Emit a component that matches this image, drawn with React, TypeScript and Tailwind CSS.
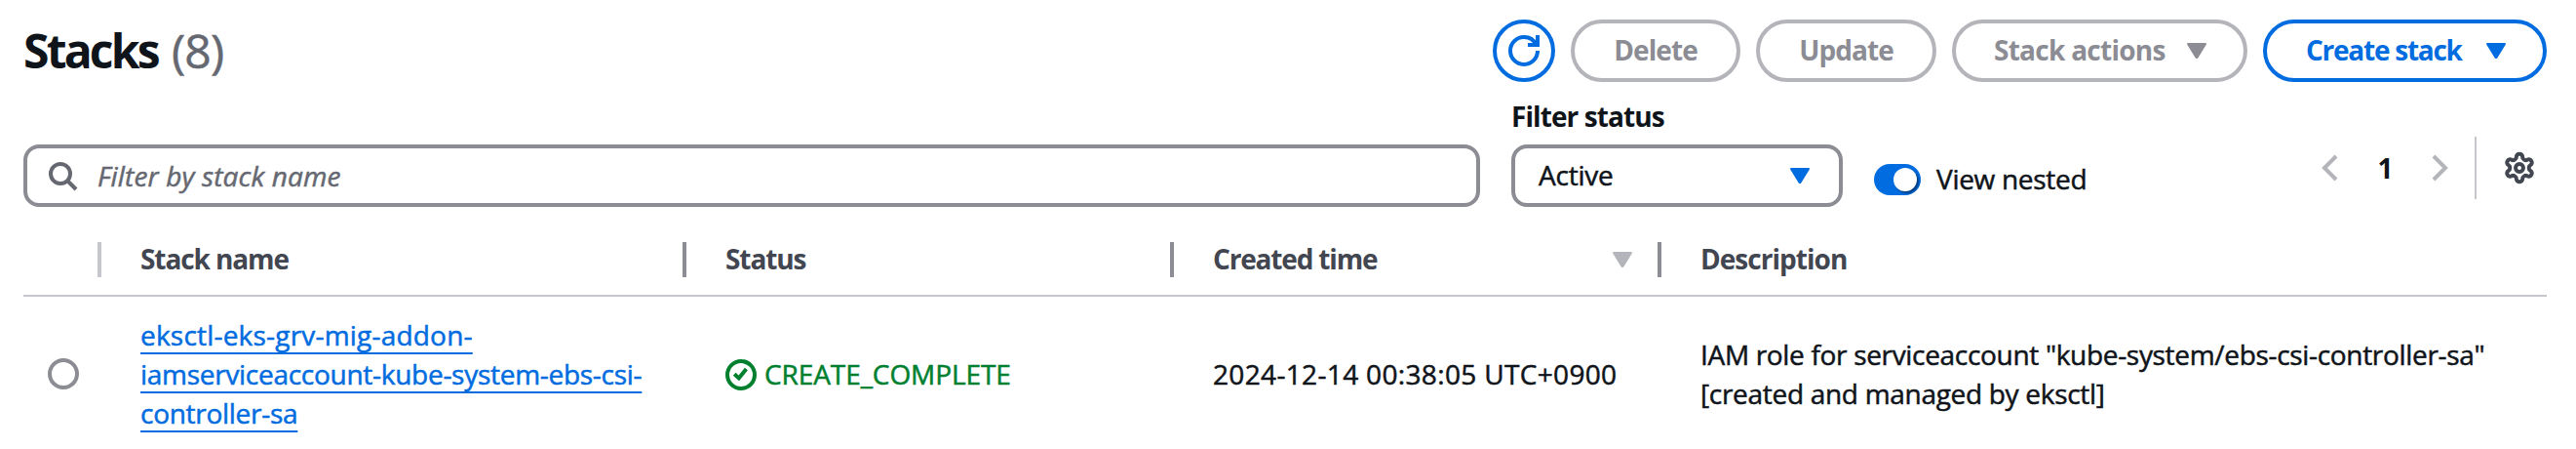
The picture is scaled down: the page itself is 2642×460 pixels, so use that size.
import React from "react";

type IconProps = { className?: string };

function RefreshIcon({ className = "" }: IconProps) {
  return (
    <svg viewBox="0 0 16 16" className={`size-8 ${className}`} fill="none" stroke="currentColor" strokeWidth="2">
      <path d="M10 5h5V0" />
      <path d="M15 8a6.957 6.957 0 0 1-7 7 6.957 6.957 0 0 1-7-7 6.957 6.957 0 0 1 7-7 6.87 6.87 0 0 1 6.3 4" />
    </svg>
  );
}

function SearchIcon({ className = "" }: IconProps) {
  return (
    <svg viewBox="0 0 16 16" className={`size-8 ${className}`} fill="none" stroke="currentColor" strokeWidth="2">
      <circle cx="7" cy="7" r="5" />
      <path d="m15 15-4.5-4.5" />
    </svg>
  );
}

function CaretIcon({ className = "" }: IconProps) {
  return (
    <svg
      viewBox="0 0 16 16"
      className={`size-8 shrink-0 ${className}`}
      fill="currentColor"
      stroke="currentColor"
      strokeWidth="1"
      strokeLinejoin="round"
    >
      <path d="M3.5 4.5h9L8.2 11.5h-.4z" />
    </svg>
  );
}

function ChevronIcon({ direction }: { direction: "left" | "right" }) {
  return (
    <svg viewBox="0 0 16 16" className="size-8 text-[#b4b4bb]" fill="none" stroke="currentColor" strokeWidth="2">
      <path d={direction === "left" ? "M11 2 5 8l6 6" : "m5 2 6 6-6 6"} />
    </svg>
  );
}

function GearIcon({ className = "" }: IconProps) {
  return (
    <svg
      viewBox="0 0 24 24"
      className={`size-[34px] ${className}`}
      fill="none"
      stroke="currentColor"
      strokeWidth="2.8"
      strokeLinejoin="round"
    >
      <path d="M12.22 2h-.44a2 2 0 0 0-2 2v.18a2 2 0 0 1-1 1.73l-.43.25a2 2 0 0 1-2 0l-.15-.08a2 2 0 0 0-2.73.73l-.22.38a2 2 0 0 0 .73 2.73l.15.1a2 2 0 0 1 1 1.72v.51a2 2 0 0 1-1 1.74l-.15.09a2 2 0 0 0-.73 2.73l.22.38a2 2 0 0 0 2.73.73l.15-.08a2 2 0 0 1 2 0l.43.25a2 2 0 0 1 1 1.73V20a2 2 0 0 0 2 2h.44a2 2 0 0 0 2-2v-.18a2 2 0 0 1 1-1.73l.43-.25a2 2 0 0 1 2 0l.15.08a2 2 0 0 0 2.73-.73l.22-.39a2 2 0 0 0-.73-2.73l-.15-.08a2 2 0 0 1-1-1.74v-.5a2 2 0 0 1 1-1.74l.15-.09a2 2 0 0 0 .73-2.73l-.22-.38a2 2 0 0 0-2.73-.73l-.15.08a2 2 0 0 1-2 0l-.43-.25a2 2 0 0 1-1-1.73V4a2 2 0 0 0-2-2z" />
      <circle cx="12" cy="12" r="2.8" />
    </svg>
  );
}

function SuccessIcon({ className = "" }: IconProps) {
  return (
    <svg viewBox="0 0 16 16" className={`size-8 ${className}`} fill="none" stroke="currentColor" strokeWidth="2">
      <circle cx="8" cy="8" r="7" />
      <path d="M4.6 7.6 6.9 9.7l3.8-4.7" />
    </svg>
  );
}

const button = "flex h-16 items-center justify-center rounded-full border-4 pb-[2px] font-bold [-webkit-text-stroke:0]";
const disabled = "border-[#b4b4bb] text-[#8c8c94]";
const columns = "grid grid-cols-[80px_600px_500px_500px_908px]";
const divider = "h-9 w-1 shrink-0";

export default function App() {
  return (
    <main className="flex h-[460px] w-[2642px] flex-col overflow-hidden bg-white pl-6 pr-[30px] font-['Open_Sans','Noto_Sans',sans-serif] text-[28px] leading-10 whitespace-nowrap text-[#0f141a] [-webkit-text-stroke:0.5px]">
      <header className="flex h-[84px] shrink-0 items-start justify-between pt-5">
        <h1 className="flex pt-[2px] text-[48px] leading-[60px]">
          <span className="w-[152px] font-bold tracking-[-2.8px] [-webkit-text-stroke:0]">Stacks</span>
          <span className="tracking-[-0.8px] text-[#656871]">(8)</span>
        </h1>
        <div className="flex gap-4">
          <button className="flex size-16 items-center justify-center rounded-full border-4 border-[#006ce0] text-[#006ce0]">
            <RefreshIcon />
          </button>
          <button className={`${button} ${disabled} w-[174px] tracking-[-0.9px]`}>Delete</button>
          <button className={`${button} ${disabled} w-[185px] tracking-[-0.93px]`}>Update</button>
          <button className={`${button} ${disabled} w-[303px] justify-start pl-[39px]`}>
            <span className="w-[192px] text-left tracking-[-0.73px]">Stack actions</span>
            <CaretIcon className="relative top-px" />
          </button>
          <button className={`${button} w-[291px] justify-start border-[#006ce0] pl-[40px] text-[#006ce0]`}>
            <span className="w-[179px] text-left tracking-[-1.25px]">Create stack</span>
            <CaretIcon className="relative top-px" />
          </button>
        </div>
      </header>

      <section className="flex h-[144px] shrink-0 items-start">
        <div className="mt-16 flex h-16 w-[1494px] items-center rounded-2xl border-4 border-[#8c8c94] pl-5">
          <SearchIcon className="text-[#656871]" />
          <span className="pl-5 tracking-[0.16px] text-[#656871] italic">Filter by stack name</span>
        </div>
        <div className="ml-8 flex w-[340px] flex-col gap-[9px] pt-[15px]">
          <label className="font-bold tracking-[-0.92px] [-webkit-text-stroke:0]">Filter status</label>
          <div className="flex h-16 items-center justify-between rounded-2xl border-4 border-[#8c8c94] pr-[24px] pl-6">
            <span className="pb-[2px] tracking-[-0.23px]">Active</span>
            <CaretIcon className="text-[#006ce0]" />
          </div>
        </div>
        <div className="ml-8 flex items-center gap-4 pt-[81px]">
          <span className="flex h-8 w-12 items-center justify-end rounded-full bg-[#006ce0] pr-1">
            <span className="size-6 rounded-full bg-white shadow-[2px_2px_2px_rgba(0,7,22,0.45)]" />
          </span>
          <span className="-mt-[2px] tracking-[-0.3px]">View nested</span>
        </div>
        <div className="mt-14 ml-auto flex h-16 items-center self-start">
          <ChevronIcon direction="left" />
          <span className="w-[80px] pb-[1px] pl-[1px] text-center font-bold [-webkit-text-stroke:0]">1</span>
          <ChevronIcon direction="right" />
          <span className="mr-[27px] ml-[20px] h-16 w-0.5 bg-[#c6c6cd]" />
          <GearIcon className="mr-[11px] text-[#424650]" />
        </div>
      </section>

      <div role="table" className="shrink-0">
        <div
          role="row"
          className={`${columns} h-[76px] items-start border-b-2 border-[#c6c6cd] pt-[17px] font-bold text-[#424650] [-webkit-text-stroke:0]`}
        >
          <div className="flex justify-end pt-[3px]">
            <span className={`${divider} bg-[#c6c6cd]`} />
          </div>
          <div className="flex justify-between pl-10">
            <span className="tracking-[-1.1px]">Stack name</span>
            <span className={`${divider} mt-[3px] bg-[#8c8c94]`} />
          </div>
          <div className="flex justify-between pl-10">
            <span className="tracking-[-1.09px]">Status</span>
            <span className={`${divider} mt-[3px] bg-[#8c8c94]`} />
          </div>
          <div className="flex pl-10">
            <span className="grow tracking-[-1.17px]">Created time</span>
            <CaretIcon className="mt-[5px] mr-5 text-[#b4b4bb]" />
            <span className={`${divider} mt-[3px] bg-[#8c8c94]`} />
          </div>
          <div className="pl-10 tracking-[-0.96px]">Description</div>
        </div>

        <div role="row" className={`${columns} h-[158px] items-center`}>
          <div className="pl-[25px]">
            <span className="block size-8 rounded-full border-4 border-[#8c8c94]" />
          </div>
          <a className="pl-10 text-[#006ce0] underline decoration-2 underline-offset-[7px] [-webkit-text-stroke:0.5px] [text-decoration-skip-ink:none]">
            <span className="tracking-[0.2px]">eksctl-eks-grv-mig-addon-</span>
            <br />
            <span className="tracking-[-0.28px]">iamserviceaccount-kube-system-ebs-csi-</span>
            <br />
            <span className="tracking-[-0.28px]">controller-sa</span>
          </a>
          <div className="flex items-center gap-2 pl-10 text-[#00802f]">
            <SuccessIcon className="relative top-px" />
            <span className="tracking-[-0.08px]">CREATE_COMPLETE</span>
          </div>
          <div className="pl-10 tracking-[0.34px]">2024-12-14 00:38:05 UTC+0900</div>
          <div className="pl-10">
            <span className="tracking-[-0.32px]">IAM role for serviceaccount "kube-system/ebs-csi-controller-sa"</span>
            <br />
            <span className="tracking-[-0.3px]">[created and managed by eksctl]</span>
          </div>
        </div>
      </div>
    </main>
  );
}
